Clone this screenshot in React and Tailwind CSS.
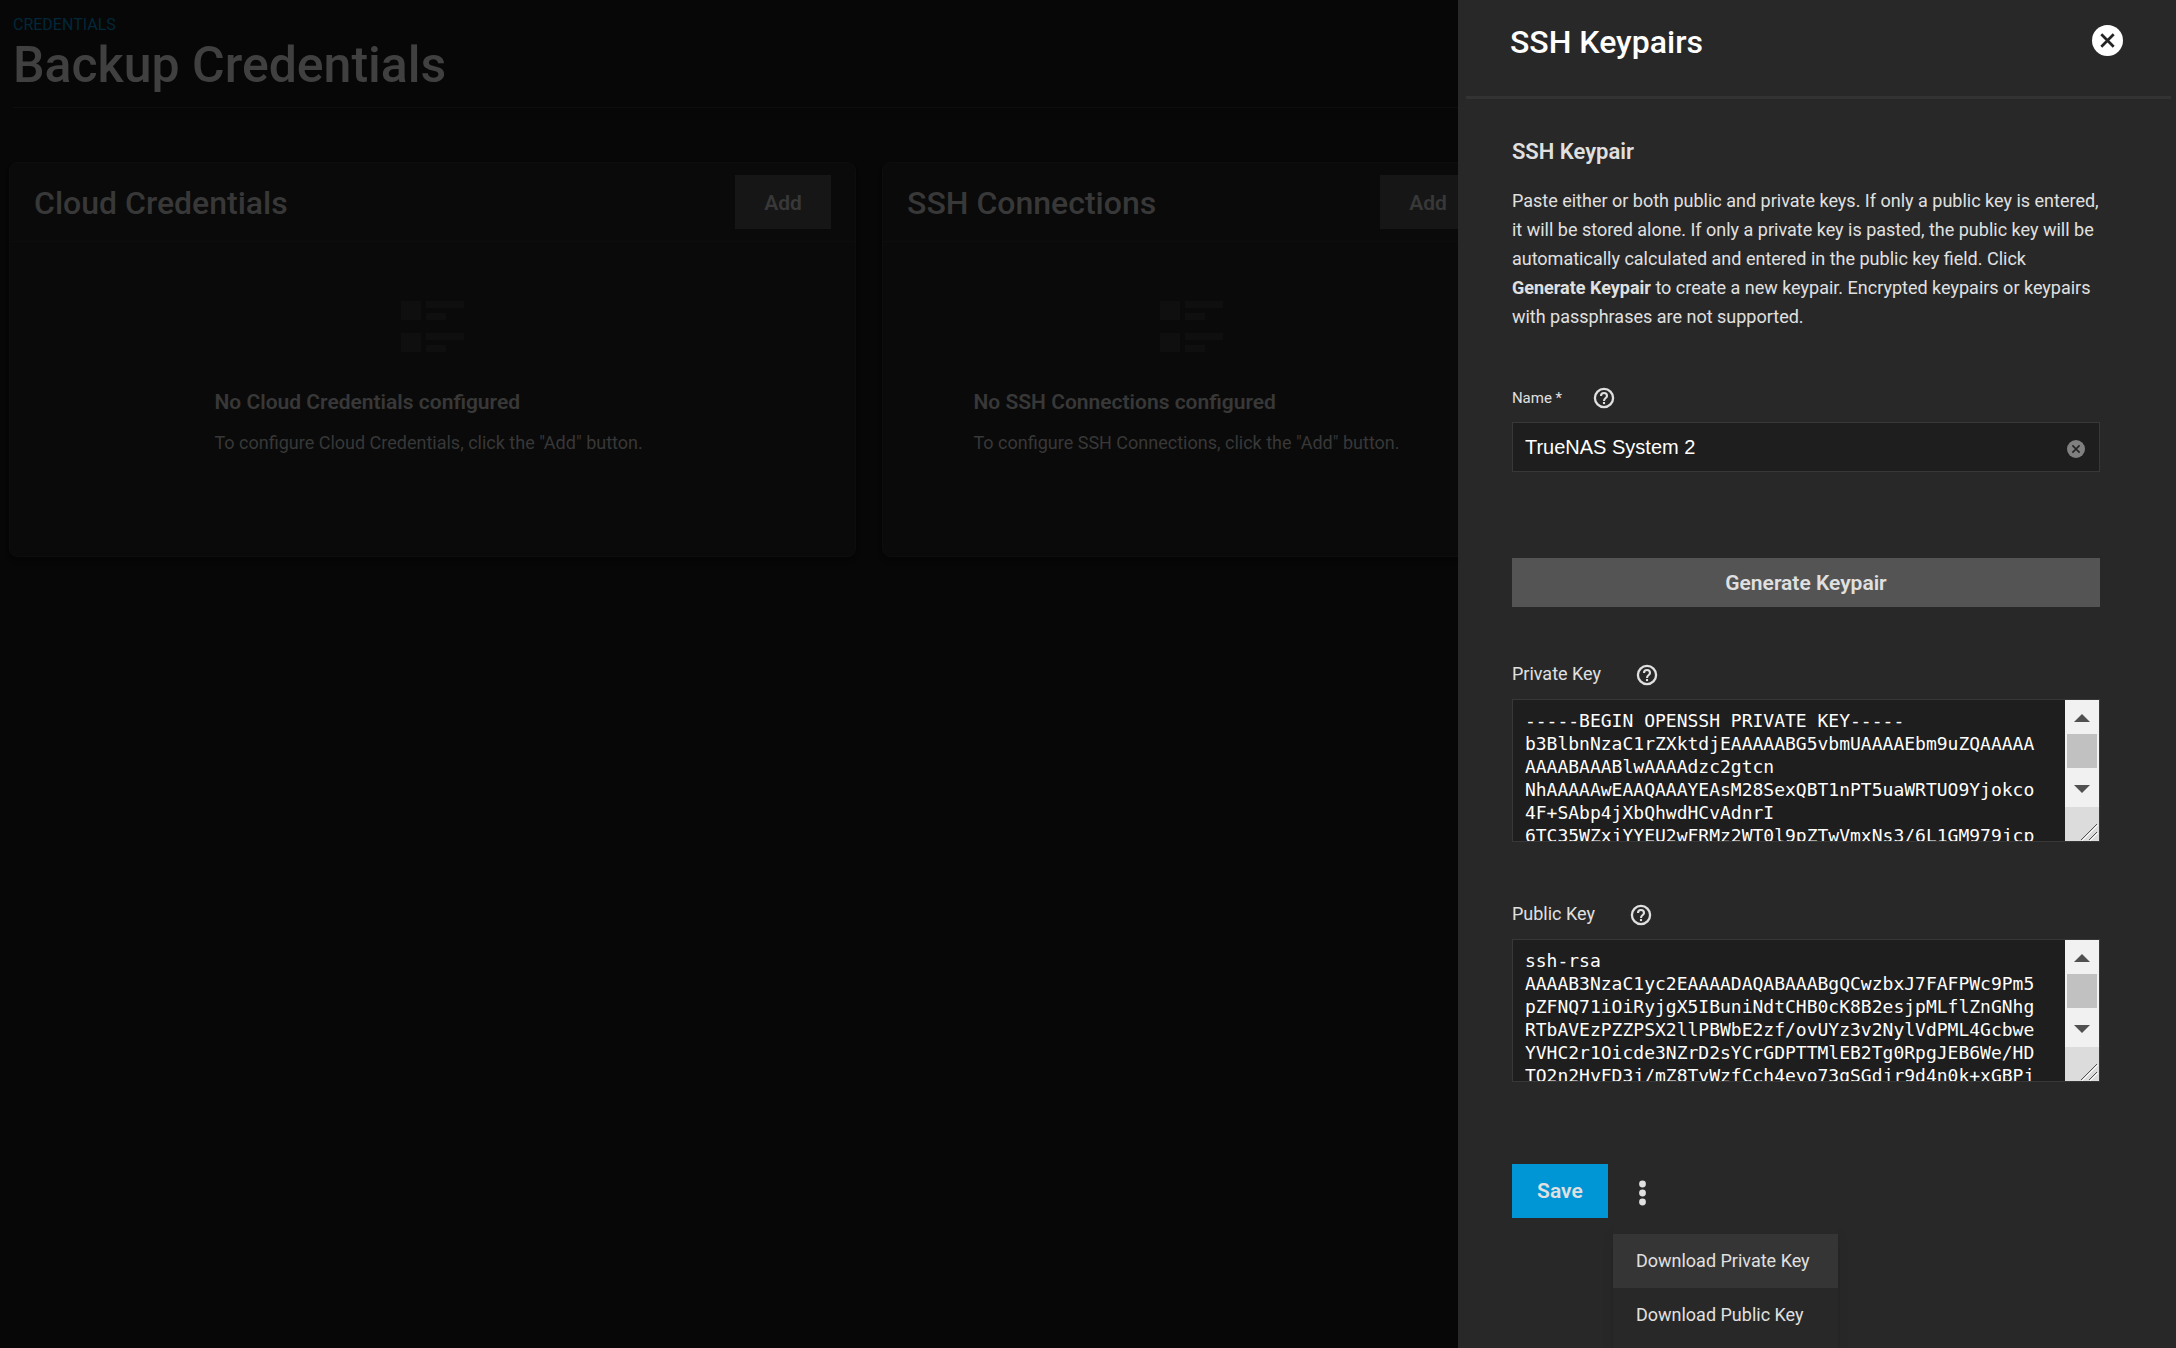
const PRIVATE_KEY = `-----BEGIN OPENSSH PRIVATE KEY-----
b3BlbnNzaC1rZXktdjEAAAAABG5vbmUAAAAEbm9uZQAAAAA
AAAABAAABlwAAAAdzc2gtcn
NhAAAAAwEAAQAAAYEAsM28SexQBT1nPT5uaWRTUO9Yjokco
4F+SAbp4jXbQhwdHCvAdnrI
6TC35WZxjYYEU2wFRMz2WT0l9pZTwVmxNs3/6L1GM979jcp`;

const PUBLIC_KEY = `ssh-rsa
AAAAB3NzaC1yc2EAAAADAQABAAABgQCwzbxJ7FAFPWc9Pm5
pZFNQ71iOiRyjgX5IBuniNdtCHB0cK8B2esjpMLflZnGNhg
RTbAVEzPZZPSX2llPBWbE2zf/ovUYz3v2NylVdPML4Gcbwe
YVHC2r1Oicde3NZrD2sYCrGDPTTMlEB2Tg0RpgJEB6We/HD
TO2n2HyFD3j/mZ8TvWzfCch4eyo73gSGdjr9d4n0k+xGBPj`;

function ListIcon() {
  return (
    <svg width="63" height="51" viewBox="0 0 63 51" fill="currentColor" aria-hidden="true">
      <rect x="0" y="0" width="20" height="19" />
      <rect x="25" y="0" width="38" height="7" />
      <rect x="25" y="12" width="20" height="7" />
      <rect x="0" y="32" width="20" height="19" />
      <rect x="25" y="32" width="38" height="7" />
      <rect x="25" y="44" width="20" height="7" />
    </svg>
  );
}

function CloseIcon({ className }) {
  return (
    <svg viewBox="0 0 24 24" className={className} aria-hidden="true">
      <circle cx="12" cy="12" r="12" fill="currentColor" />
      <path d="M7.2 7.2 16.8 16.8M16.8 7.2 7.2 16.8" stroke="#242424" strokeWidth="2.1" />
    </svg>
  );
}

function Card({ title }) {
  return (
    <section className="flex flex-col rounded-lg border border-[#0d0d0d] bg-[#0a0a0a] shadow-md">
      <header className="flex items-center justify-between border-b border-[#0d0d0d] px-6 py-3">
        <h2 className="pt-[2px] text-[32px] leading-10 font-medium whitespace-nowrap">{title}</h2>
        <button
          type="button"
          className="h-[54px] w-24 bg-[#161616] pt-[3px] text-[21px] font-semibold"
        >
          Add
        </button>
      </header>
      <div className="flex flex-col items-center pt-[59px] pb-[99px]">
        <span className="text-[#0f0f0f]">
          <ListIcon />
        </span>
        <div className="mt-9 min-w-[436px]">
          <h3 className="text-[21px] leading-7 font-semibold">No {title} configured</h3>
          <p className="mt-[13px] text-[18px] leading-7">
            To configure {title}, click the "Add" button.
          </p>
        </div>
      </div>
    </section>
  );
}

function Help({ label }) {
  return (
    <button type="button" aria-label={label} className="text-[#e0e0e0]">
      <svg viewBox="0 0 24 24" className="size-6" fill="none" stroke="currentColor" aria-hidden="true">
        <circle cx="12" cy="12" r="9.1" strokeWidth="2.3" />
        <path
          d="M9 10a3 3 0 0 1 6 0c0 2-3 2.2-3 5"
          strokeWidth="2.1"
        />
        <path d="M12 16v2.1" strokeWidth="2.1" />
      </svg>
    </button>
  );
}

function ScrollBar() {
  return (
    <div className="flex w-[34px] flex-col bg-[#f1f1f1]" aria-hidden="true">
      <svg viewBox="0 0 34 34" className="h-[34px]" fill="#505050">
        <path d="M9 22 17 14 25 22z" />
      </svg>
      <div className="mx-[2px] h-[34px] bg-[#c1c1c1]" />
      <svg viewBox="0 0 34 39" className="h-[39px]" fill="#505050">
        <path d="M9 17 17 25 25 17z" />
      </svg>
      <svg viewBox="0 0 34 34" className="h-[34px] bg-[#dcdcdc]" fill="none">
        <path d="M16 33 32 17M24 33 32 25" stroke="#505050" />
        <path d="M17 34 33 18M25 34 33 26" stroke="#ffffff" />
      </svg>
    </div>
  );
}

function KeyField({ id, label, value }) {
  return (
    <div>
      <div className="flex items-center gap-[34px]">
        <label htmlFor={id} className="pb-[2px] text-[18px] leading-[22px]">
          {label}
        </label>
        <Help label={"About " + label} />
      </div>
      <div className="mt-3 flex h-[143px] border border-[#383838] bg-[#1e1e1e]">
        <textarea
          id={id}
          wrap="off"
          defaultValue={value}
          className="min-w-0 flex-1 resize-none overflow-hidden px-3 pt-[9px] font-['DejaVu_Sans_Mono',monospace] text-[18px] leading-[23px] text-white outline-none"
        />
        <ScrollBar />
      </div>
    </div>
  );
}

export default function App() {
  return (
    <div className="relative h-screen overflow-hidden bg-[#070707] font-[Roboto,sans-serif] text-[#383838]">
      <main>
        <header className="ml-[13px] border-b border-[#0d0d0d] pt-[13px] pb-[14px]">
          <a href="#credentials" className="block text-[16px] leading-6 text-[#02283a]">
            CREDENTIALS
          </a>
          <h1 className="text-[50px] leading-[56px] font-medium text-[#404040]">
            Backup Credentials
          </h1>
        </header>
        <div className="grid grid-cols-[847fr_619fr_640fr] gap-[26px] px-[9px] pt-[54px]">
          <Card title="Cloud Credentials" />
          <Card title="SSH Connections" />
        </div>
      </main>

      <aside className="absolute inset-y-0 right-0 w-[33%] bg-[#282828] text-[#e0e0e0]">
        <header className="mr-[5px] ml-2 flex items-start justify-between border-b-[3px] border-[#333333] pt-[21px] pr-12 pb-[33px] pl-11 text-white">
          <h2 className="text-[32px] leading-[42px] font-medium">SSH Keypairs</h2>
          <button type="button" aria-label="Close" className="pt-1">
            <CloseIcon className="size-[31px]" />
          </button>
        </header>
        <form className="pr-[76px] pl-[54px]">
          <h3 className="mt-[37px] text-[22px] leading-8 font-semibold">SSH Keypair</h3>
          <p className="mt-[18px] text-[18px] leading-[29px]">
            Paste either or both public and private keys. If only a public key is entered, it will
            be stored alone. If only a private key is pasted, the public key will be automatically
            calculated and entered in the public key field. Click <b>Generate Keypair</b> to create
            a new keypair. Encrypted keypairs or keypairs with passphrases are not supported.
          </p>
          <div className="mt-[55px] flex items-center gap-[30px]">
            <label htmlFor="name" className="text-[15px] leading-6">
              Name *
            </label>
            <Help label="About Name" />
          </div>
          <div className="mt-3 flex h-[50px] items-center border border-[#383838] bg-[#1e1e1e] pr-[14px]">
            <input
              id="name"
              type="text"
              defaultValue="TrueNAS System 2"
              className="h-full min-w-0 flex-1 px-3 font-['Liberation_Sans',sans-serif] text-[20px] text-white outline-none"
            />
            <button type="button" aria-label="Clear name" className="pt-1 text-[#808080]">
              <CloseIcon className="size-[18px]" />
            </button>
          </div>
          <button
            type="button"
            className="mt-[86px] h-[49px] w-full bg-[#545454] pt-[2px] text-[21px] font-semibold"
          >
            Generate Keypair
          </button>
          <div className="mt-14">
            <KeyField id="private-key" label="Private Key" value={PRIVATE_KEY} />
          </div>
          <div className="mt-[61px]">
            <KeyField id="public-key" label="Public Key" value={PUBLIC_KEY} />
          </div>
          <div className="mt-[82px] flex items-center">
            <button
              type="submit"
              className="h-[54px] w-24 bg-[#0095d5] pt-[2px] text-[21px] font-semibold"
            >
              Save
            </button>
            <div className="relative ml-4">
              <button type="button" aria-label="More actions" className="block">
                <svg width="36" height="36" viewBox="0 0 36 36" fill="currentColor" aria-hidden="true">
                  <circle cx="18.5" cy="11" r="3.4" />
                  <circle cx="18.5" cy="20" r="3.4" />
                  <circle cx="18.5" cy="29" r="3.4" />
                </svg>
              </button>
              <div
                role="menu"
                className="absolute top-full -left-[11px] mt-[13px] w-[225px] rounded-md bg-[#282828] py-3 shadow-lg"
              >
                <button
                  type="button"
                  role="menuitem"
                  className="block h-[54px] w-full bg-[#353535] px-[23px] pb-[2px] text-left text-[18px]"
                >
                  Download Private Key
                </button>
                <button
                  type="button"
                  role="menuitem"
                  className="block h-[54px] w-full px-[23px] pb-[2px] text-left text-[18px]"
                >
                  Download Public Key
                </button>
              </div>
            </div>
          </div>
        </form>
      </aside>
    </div>
  );
}
